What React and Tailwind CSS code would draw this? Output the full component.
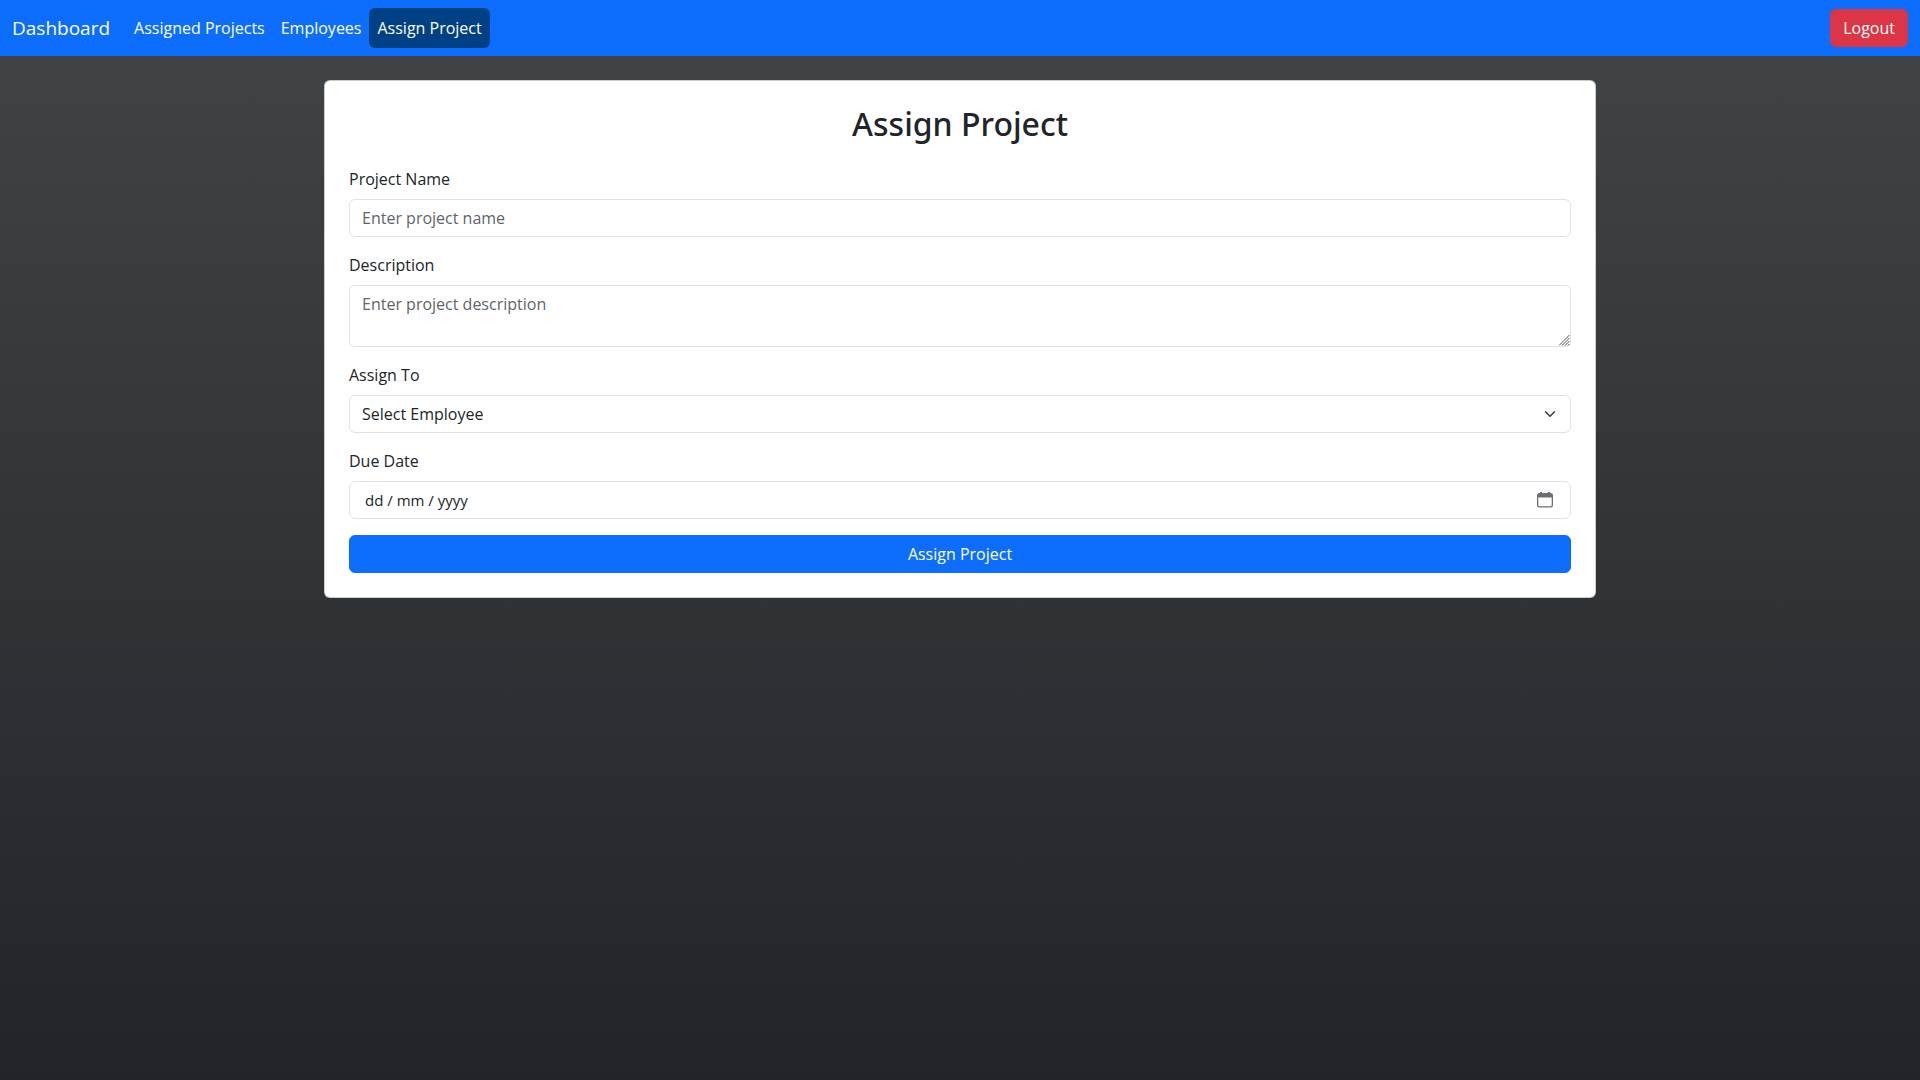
const navLinks = [
  { label: 'Assigned Projects' },
  { label: 'Employees' },
  { label: 'Assign Project', active: true },
];

const fieldClass =
  'block w-full rounded-md border border-[#dee2e6] bg-white px-3 py-1.5 text-base leading-6 text-[#212529] placeholder:text-[#5f656b]';

function Field({ id, label, children }) {
  return (
    <div className="mb-4">
      <label htmlFor={id} className="mb-2 block">
        {label}
      </label>
      {children}
    </div>
  );
}

function Navbar() {
  return (
    <nav className="flex items-center bg-[#0d6efd] px-3 py-2 text-white">
      <a href="#" className="mr-4 text-[19px] leading-[30px]">
        Dashboard
      </a>
      <ul className="flex flex-1">
        {navLinks.map((link) => (
          <li key={link.label}>
            <a
              href="#"
              className={
                link.active
                  ? 'block rounded-md bg-[#004085] p-2'
                  : 'block p-2'
              }
            >
              {link.label}
            </a>
          </li>
        ))}
      </ul>
      <button type="button" className="rounded-md border border-[#dc3545] bg-[#dc3545] px-3 py-1.5">
        Logout
      </button>
    </nav>
  );
}

export default function App() {
  return (
    <div className="min-h-screen bg-linear-to-b from-[#424547] to-[#212529] font-['Open_Sans',sans-serif] text-base leading-6 text-[#212529]">
      <Navbar />
      <main className="mx-auto max-w-[1320px] p-6">
        <div className="rounded-md border border-black/20 bg-white bg-clip-border p-6">
          <h2 className="mb-6 text-center font-['Noto_Sans',sans-serif] text-[32px] leading-[38px] font-medium">
            Assign Project
          </h2>
          <form onSubmit={(e) => e.preventDefault()}>
            <Field id="name" label="Project Name">
              <input id="name" type="text" placeholder="Enter project name" className={fieldClass} />
            </Field>
            <Field id="description" label="Description">
              <div className="relative">
                <textarea
                  id="description"
                  rows={2}
                  placeholder="Enter project description"
                  className={`${fieldClass} resize-y [&::-webkit-resizer]:bg-transparent`}
                />
                <svg
                  viewBox="0 0 11 11"
                  className="pointer-events-none absolute right-px bottom-px h-[11px] w-[11px]"
                  fill="none"
                  stroke="#555"
                  strokeWidth="1"
                >
                  <path d="M0 10.500 10.500 0M3 10.500 10.500 3M6 10.500 10.500 6M9 10.500 10.500 9" />
                </svg>
              </div>
            </Field>
            <Field id="employee" label="Assign To">
              <div className="relative">
                <select id="employee" className={`${fieldClass} appearance-none`}>
                  <option>Select Employee</option>
                </select>
                <svg
                  viewBox="0 0 16 16"
                  className="pointer-events-none absolute top-1/2 right-[13px] h-3 w-4 -translate-y-1/2"
                  fill="none"
                  stroke="#343a40"
                  strokeWidth="2"
                  strokeLinecap="round"
                  strokeLinejoin="round"
                >
                  <path d="m2 5 6 6 6-6" />
                </svg>
              </div>
            </Field>
            <Field id="due" label="Due Date">
              <div className="relative">
                <input
                  id="due"
                  type="text"
                  placeholder="dd / mm / yyyy"
                  className="block w-full rounded-md border border-[#dee2e6] bg-white px-[15px] py-1.5 text-[15px] leading-6 placeholder:text-[#212529]"
                />
                <button
                  type="button"
                  aria-label="Open calendar"
                  className="absolute top-1/2 right-[18px] -translate-y-1/2"
                >
                  <svg viewBox="0 0 16 16" className="block h-4 w-4" fill="#6b6f73">
                    <path
                      fillRule="evenodd"
                      d="M3 0h2v1h6V0h2v1h.5A2.500 2.500 0 0 1 16 3.500v9.500a2.500 2.500 0 0 1-2.500 2.500h-11A2.500 2.500 0 0 1 0 13v-9.500A2.500 2.500 0 0 1 2.500 1H3zM1.300 5.500v7.500A1.300 1.300 0 0 0 2.600 14.300h10.800a1.300 1.300 0 0 0 1.300-1.300V5.500z"
                    />
                  </svg>
                </button>
              </div>
            </Field>
            <button
              type="submit"
              className="block w-full rounded-md border border-[#0d6efd] bg-[#0d6efd] py-1.5 text-white"
            >
              Assign Project
            </button>
          </form>
        </div>
      </main>
    </div>
  );
}
